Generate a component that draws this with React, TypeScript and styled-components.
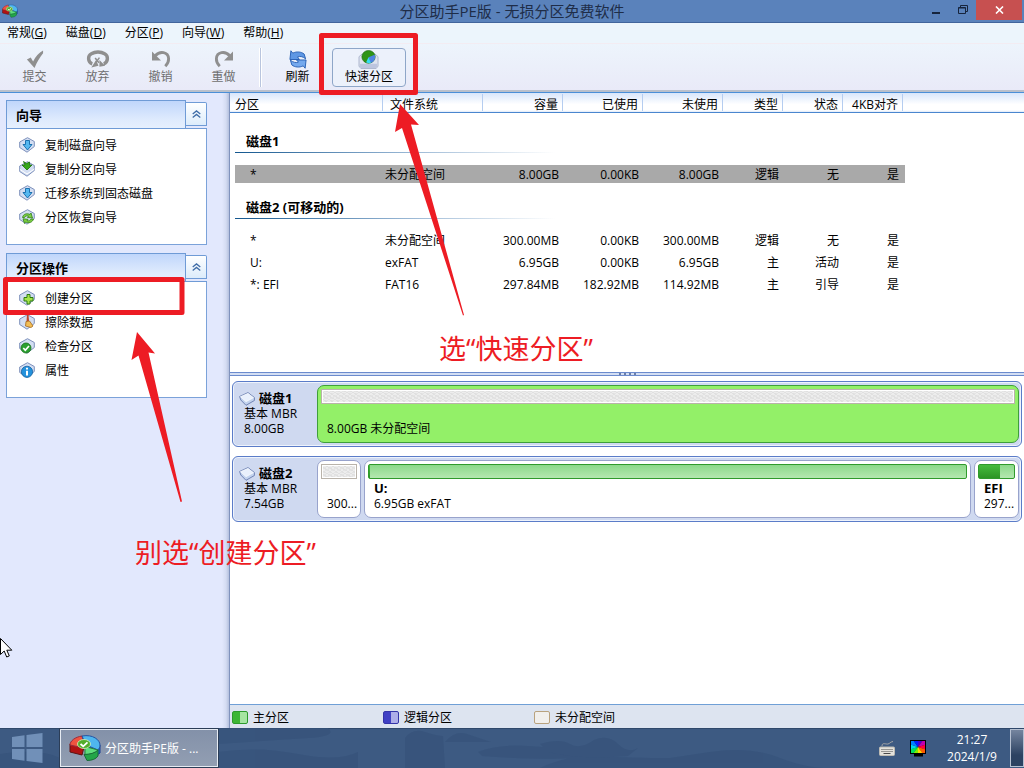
import React from "react";
import styled, { createGlobalStyle, css } from "styled-components";

const GlobalStyle = createGlobalStyle`
  * { box-sizing: border-box; }
  body { margin: 0; }
  body, button, table {
    font-family: "Open Sans", "Noto Sans CJK SC", sans-serif;
    font-size: 12px;
    line-height: 15px;
    color: #000;
  }
  button { margin: 0; padding: 0; border: 0; background: none; cursor: default; white-space: nowrap; }
  b { font-size: 13px; }
  svg { display: block; flex: none; }
`;

const Desktop = styled.div`
  position: relative;
  display: flex;
  flex-direction: column;
  min-height: 100vh;
  overflow: hidden;
  background: #fff;
`;

/* ---------- title bar ---------- */

const TitleBar = styled.header`
  display: grid;
  grid-template-columns: 1fr auto 1fr;
  height: 23px;
  background: #5a82bb;
  border-bottom: 1px solid #41659c;
`;

const TitleIcon = styled.div`
  padding: 4px 0 0 2px;
`;

const TitleText = styled.h1`
  margin: 0;
  font-size: 15px;
  font-weight: 400;
  line-height: 23px;
  color: #1e2d48;
`;

const WindowButtons = styled.div`
  display: flex;
  justify-content: flex-end;
  padding-right: 2px;
`;

const WindowButton = styled.button<{ $close?: boolean }>`
  display: flex;
  align-items: center;
  justify-content: center;
  width: ${(p) => (p.$close ? 46 : 26)}px;
  height: 20px;
  ${(p) => p.$close && css`background: #c75050;`}
`;

/* ---------- menu and toolbar ---------- */

const MenuBar = styled.nav`
  display: flex;
  gap: 19px;
  height: 20px;
  padding-left: 7px;
  background: #ecf5fc;
`;

const MenuItem = styled.button`
  line-height: 20px;
`;

const ToolBar = styled.div`
  display: flex;
  align-items: flex-start;
  height: 49px;
  padding: 4px 0 0 3px;
  background: linear-gradient(#edf4fc, #e9eaf8);
  border-top: 1px solid #f3ecf2;
  border-bottom: 2px solid #b9c0cc;
`;

const ToolButton = styled.button<{ $framed?: boolean }>`
  display: flex;
  flex-direction: column;
  align-items: center;
  width: 63px;
  height: 39px;
  padding-top: 1px;
  border: 1px solid transparent;
  &:disabled { color: #6f6f6f; }
  ${(p) =>
    p.$framed &&
    css`
      width: 74px;
      margin-left: 3px;
      border-color: #8ea6c8;
      border-radius: 4px;
      background: #ecf1fb;
    `}
`;

const ToolSeparator = styled.div`
  width: 3px;
  height: 39px;
  margin: 0 4px;
  border-left: 1px solid #fff;
  border-right: 1px solid #fff;
  background: #b9c5de;
`;

/* ---------- work area ---------- */

const WorkArea = styled.div`
  display: flex;
  flex: 1;
  border-top: 1px solid #4a8fd8;
`;

const Sidebar = styled.aside`
  display: flex;
  flex-direction: column;
  gap: 8px;
  flex: none;
  width: 230px;
  padding: 7px 22px 0 6px;
  border-right: 1px solid #8093bd;
  background: linear-gradient(to right, #e2e8fd 222px, #d4dcf2 226px, #b4c0de 229px);
`;

const TaskPanel = styled.section`
  height: 145px;
  border: 1px solid #7ba2d9;
  border-top: 0;
  background: #fff;
`;

const TaskPanelHead = styled.div`
  display: flex;
  align-items: center;
  height: 29px;
  margin: 0 -1px;
  border-bottom: 1px solid #6f9bd6;
  background: #e2e8fd;
`;

const TaskPanelTitle = styled.h2`
  flex: 1;
  height: 28px;
  margin: 0;
  padding-left: 9px;
  font-size: 13px;
  line-height: 28px;
  border: 1px solid #6f9bd6;
  border-bottom: 0;
  background: linear-gradient(#c0d6fb, #dfebfd 70%, #e6f0fe);
`;

const CollapseButton = styled.button`
  display: flex;
  align-items: center;
  justify-content: center;
  width: 21px;
  height: 24px;
  border: 1px solid #6f9bd6;
  border-left: 0;
  border-radius: 0 2px 0 0;
  background: linear-gradient(#fff, #dcecfb);
`;

const TaskList = styled.ul`
  margin: 0;
  padding: 4px 0 0 12px;
  list-style: none;
`;

const TaskButton = styled.button`
  display: flex;
  align-items: center;
  gap: 10px;
  height: 24px;
`;

const Main = styled.main`
  display: flex;
  flex-direction: column;
  flex: 1;
  min-width: 0;
`;

/* ---------- partition table ---------- */

const ListPane = styled.div`
  height: 279px;
`;

const PartitionTable = styled.table`
  width: 100%;
  table-layout: fixed;
  border-spacing: 0;
`;

const HeadCell = styled.th<{ $width?: number; $left?: number }>`
  width: ${(p) => (p.$width ? `${p.$width}px` : "auto")};
  height: 20px;
  padding: 3px 5px 0 ${(p) => p.$left ?? 0}px;
  font-weight: 400;
  text-align: ${(p) => (p.$left ? "left" : "right")};
  white-space: nowrap;
  border-bottom: 1px solid #4a86cf;
  background:
    linear-gradient(#b5cdf0, #b5cdf0) right 0 top 1px / ${(p) => (p.$width ? 1 : 0)}px 17px no-repeat,
    linear-gradient(#d8e6fb, #fff 60%, #fff 90%, #dfe9f8);
`;

const GroupCell = styled.th<{ $height: number }>`
  height: ${(p) => p.$height}px;
  padding: 0 0 10px 5px;
  vertical-align: bottom;
  text-align: left;
`;

const GroupTitle = styled.div`
  width: 320px;
  height: 23px;
  padding-left: 11px;
  font-size: 13px;
  line-height: 22px;
  background: linear-gradient(to right, #14578f, #8fb0d0 50%, #fff) left bottom / 100% 1px no-repeat;
`;

const Row = styled.tr<{ $selected?: boolean }>`
  ${(p) =>
    p.$selected &&
    css`background: linear-gradient(#a9a9a9, #a9a9a9) 5px 2px / 670px 18px no-repeat;`}
`;

const Cell = styled.td<{ $left?: number }>`
  height: 22px;
  padding: 0 4px 0 ${(p) => p.$left ?? 0}px;
  text-align: ${(p) => (p.$left ? "left" : "right")};
  white-space: nowrap;
`;

const Splitter = styled.div`
  display: flex;
  align-items: center;
  justify-content: center;
  gap: 3px;
  height: 4px;
  border: solid #6c8bcd;
  border-width: 1px 0;
  background: #d3def3;
`;

const Grip = styled.i`
  width: 2px;
  height: 2px;
  background: #6b7ea8;
`;

/* ---------- disk map ---------- */

const DiskMap = styled.div`
  display: flex;
  flex-direction: column;
  gap: 9px;
  flex: 1;
  padding: 5px 2px;
`;

const Disk = styled.section`
  display: flex;
  gap: 3px;
  height: 66px;
  padding: 3px 2px 3px 0;
  border: 1px solid #5b7cc8;
  border-radius: 6px;
  background: #cfd9f0;
  box-shadow: inset 0 0 0 1px #eef3fc;
`;

const DiskInfo = styled.div`
  width: 81px;
  padding: 6px 0 0 11px;
`;

const DiskName = styled.div`
  display: flex;
  align-items: center;
  gap: 4px;
  height: 15px;
  margin-left: -5px;
`;

const Partition = styled.div<{ $width?: number; $selected?: boolean }>`
  display: flex;
  flex-direction: column;
  flex: ${(p) => (p.$width ? `0 0 ${p.$width}px` : "1")};
  min-width: 0;
  height: 58px;
  padding: 3px;
  border: 1px solid ${(p) => (p.$selected ? "#3f9f3a" : "#98a3cc")};
  border-radius: 7px;
  background: ${(p) => (p.$selected ? "#93f068" : "#fff")};
`;

const UsageBar = styled.div<{ $kind: "free" | "primary" }>`
  height: 15px;
  flex: none;
  border: 1px solid;
  ${(p) =>
    p.$kind === "free"
      ? css`
          border-color: #b9b3aa;
          background:
            repeating-linear-gradient(30deg, #e0e0e0 0 1px, transparent 1px 3px),
            repeating-linear-gradient(-30deg, #e4e4e4 0 1px, #ededed 1px 3px);
          box-shadow: inset 0 0 0 1px #fff;
        `
      : css`
          border-color: #2f9a2c;
          border-radius: 2px;
          background: linear-gradient(#8cd88a, #b4e8b0);
        `}
`;

const UsageFill = styled.div`
  min-width: 1px;
  height: 100%;
  background: linear-gradient(#46bb3d, #2d9426);
`;

const PartitionText = styled.div`
  flex: 1;
  display: flex;
  flex-direction: column;
  justify-content: flex-end;
  padding: 0 0 3px 6px;
  white-space: nowrap;
`;

/* ---------- legend ---------- */

const Legend = styled.footer`
  display: flex;
  align-items: center;
  height: 24px;
  padding-left: 2px;
  border-top: 1px solid #6f9fd6;
  background: #dde4f0;
`;

const LegendItem = styled.div`
  display: flex;
  align-items: center;
  gap: 5px;
  width: 151px;
  padding-top: 2px;
`;

const Swatch = styled.span<{ $border: string; $fill: string }>`
  width: 16px;
  height: 13px;
  border: 1px solid ${(p) => p.$border};
  border-radius: 2px;
  background: ${(p) => p.$fill};
`;

/* ---------- taskbar ---------- */

const TaskBar = styled.div`
  position: relative;
  display: flex;
  align-items: center;
  height: 40px;
  background: #3d5a82;
`;

const TaskBarScene = styled.svg`
  position: absolute;
  inset: 0;
  width: 100%;
  height: 100%;
`;

const StartButton = styled.button`
  position: relative;
  width: 60px;
  height: 40px;
  padding-left: 12px;
`;

const AppButton = styled.button`
  position: relative;
  display: flex;
  align-items: center;
  gap: 4px;
  width: 158px;
  height: 38px;
  padding-left: 8px;
  color: #fff;
  border: 1px solid #e6ebf2;
  outline: 1px solid #2b3d57;
  background: linear-gradient(#8391a9, #929eb2);
`;

const Tray = styled.div`
  position: relative;
  display: flex;
  align-items: center;
  gap: 15px;
  margin-left: auto;
`;

const Clock = styled.time`
  width: 62px;
  margin-right: -8px;
  line-height: 17px;
  text-align: center;
  color: #fff;
`;

const ShowDesktop = styled.button`
  width: 14px;
  height: 38px;
  border: 1px solid #b6c1d2;
  background: linear-gradient(#75859f, #2c4262 70%);
`;

/* ---------- notes drawn over the window ---------- */

const NoteLayer = styled.svg`
  position: absolute;
  left: 0;
  top: 0;
  pointer-events: none;
`;

const Note = styled.p<{ $x: number; $y: number }>`
  position: absolute;
  left: ${(p) => p.$x}px;
  top: ${(p) => p.$y}px;
  margin: 0;
  font-size: 27px;
  line-height: 36px;
  white-space: nowrap;
  color: #ed1c24;
  pointer-events: none;
`;

/* ---------- drawings ---------- */

const PieLogo = ({ width, height }: { width: number; height: number }) => (
  <svg width={width} height={height} viewBox="0 0 32 26" aria-hidden="true">
    <path d="M1 9v8l12 3 2-8z" fill="#b01212" stroke="#5d1212" />
    <path d="M16 13l15-3v8l-3 2z" fill="#1e6fc0" stroke="#1b3f92" />
    <path d="M13 1C6 2 1 6 1 10l9 2 5-2z" fill="#ef5340" stroke="#9b2b3c" />
    <path d="M13 1C24-1 31 5 31 10c0 2-1 4-2 5l-12-5z" fill="#4fb6ee" stroke="#27529f" />
    <path d="M16 11.500l13 3.500c-2 3-7 4.500-13 4.500z" fill="#5fdd7d" stroke="#25823f" />
    <path d="M15 19.500c6 0 11-1.500 14-4.500v6c-2 3-6 4.500-11 4.500z" fill="#23a548" stroke="#1a6b38" />
    <ellipse cx="15" cy="9" rx="6.500" ry="4.500" fill="#52ad2c" stroke="#d8f3c4" strokeWidth="0.800" />
    <path d="M11.500 9l2.700 2.300 4.300-4" fill="none" stroke="#fff" strokeWidth="1.800" />
  </svg>
);

const Plate = () => (
  <path d="M0.700 5L8.500 0.700 15.300 4.500v5L8 15.200 0.700 10.500z" fill="#d3def2" stroke="#7d90bb" strokeLinejoin="round" />
);

const taskMarks: Record<string, React.ReactNode> = {
  down: <path d="M6.500 3.500h4v4h2.500L8.500 13 4 7.500h2.500z" fill="#55b8f0" stroke="#0f66a8" strokeWidth="0.900" />,
  green: (
    <>
      <path d="M1 8.500l7 4.500 7.500-5" fill="none" stroke="#fff" />
      <path d="M4.500 0.500l3 2 3-1.500v3h2.500L8 9 3 4h3z" fill="#35a818" stroke="#1c6f0d" strokeWidth="0.800" />
    </>
  ),
  restore: (
    <>
      <path d="M3.500 8.500C4 5 8 3.800 11 5.500l1-1.500 1.500 5-5-.5 1-1.500C8 6.500 6 7 5.500 8.500z" fill="#7fd042" stroke="#2d7d17" strokeWidth="0.800" />
      <path d="M14.500 10c-1 3.500-5 4.700-8 3l-1 1.500L4 9.800l5 .5-1 1.300c1.500.7 3.500 0 4-1.600z" fill="#7fd042" stroke="#2d7d17" strokeWidth="0.800" />
    </>
  ),
  plus: <path d="M8 4.500h3V7.500H14V11h-3v3H8v-3H5V7.500h3z" fill="#a5e34a" stroke="#2b7c10" />,
  broom: (
    <>
      <path d="M8 0.500l1.500 0L10 7 7.500 8z" fill="#c0472c" />
      <path d="M7 7.500l3.500-.5L14 12l-2 1.500L6.500 12z" fill="#f2bd55" stroke="#a46a1c" strokeWidth="0.800" />
    </>
  ),
  check: (
    <>
      <circle cx="7" cy="10" r="5" fill="#2ba02f" stroke="#17701c" strokeWidth="0.800" />
      <path d="M4.300 10l2 2.200L10 8" fill="none" stroke="#fff" strokeWidth="1.700" />
    </>
  ),
  info: (
    <>
      <circle cx="8" cy="9.800" r="5.600" fill="#2492dc" stroke="#12609f" strokeWidth="0.800" />
      <path d="M8 5.700v1.800M8 8.700v4.800" stroke="#fff" strokeWidth="2" />
    </>
  ),
};

const TaskIcon = ({ mark }: { mark: string }) => (
  <svg width="16" height="16" viewBox="0 0 16 16" aria-hidden="true">
    <Plate />
    {taskMarks[mark]}
  </svg>
);

const DiskIcon = () => (
  <svg width="16" height="14" viewBox="0 0 16 14" aria-hidden="true">
    <path d="M0.600 4.500L9 0.600 15.400 5.500v3L7 13.300 1.800 8z" fill="#c3d3ee" stroke="#7184b4" strokeLinejoin="round" />
    <path d="M1.500 4.700L9 1.400l5.500 4.300-7.500 4z" fill="#e9f0fc" stroke="#fff" strokeWidth="0.600" />
  </svg>
);

const toolIcons = {
  commit: <path d="M1.500 10l4-2 2.500 4C10.500 7 14 3 18.500 0.500v3C15 8 12 13 9.500 19z" fill="#8f8f8f" />,
  discard: (
    <>
      <path d="M5.500 14.500C0.500 13 0.500 6 4.500 4c4-2.500 10-2.500 14 0 4 2 4 9-1 10.500" fill="none" stroke="#8f8f8f" strokeWidth="3.600" />
      <path d="M8.500 8.500l4 5M13 8l-4 5.500" stroke="#8f8f8f" strokeWidth="1.600" />
      <path d="M4.500 18.500l5-8 2.500 6zM13 10.500l6 6-6 1z" fill="#8f8f8f" />
    </>
  ),
  undo: (
    <>
      <path d="M4 6C9 0.500 17.500 2 18 9c.2 3-1 5.500-3.500 8" fill="none" stroke="#8f8f8f" strokeWidth="3" />
      <path d="M0.500 1.500V11H10z" fill="#8f8f8f" />
    </>
  ),
  redo: (
    <>
      <path d="M16 6C11 0.500 2.500 2 2 9c-.2 3 1 5.500 3.500 8" fill="none" stroke="#8f8f8f" strokeWidth="3" />
      <path d="M19.500 1.500V11H10z" fill="#8f8f8f" />
    </>
  ),
  refresh: (
    <>
      <path d="M2.500 0.800l2 2.500c4-2 9-1.500 12 1l1.500 5c-3-2.500-6-3-8.500-2l2 2.700H1.500z" fill="#5e97e4" stroke="#2860b4" />
      <path d="M17.500 19.200l-2-2.500c-4 2-9 1.500-12-1l-1.500-5c3 2.500 6 3 8.500 2L8.500 10.500h10z" fill="#74a9ee" stroke="#2860b4" />
    </>
  ),
  quick: (
    <>
      <path d="M1 7l3-2.500h14L21 7v10l-2 2.500H3L1 17z" fill="#dfe3f0" stroke="#aab4cc" />
      <path d="M2 14.500h18V17l-1.500 2h-15L2 17z" fill="#bcc5df" />
      <ellipse cx="11" cy="7.200" rx="7" ry="6.700" fill="#2f9416" stroke="#1d6a14" strokeWidth="0.700" />
      <path d="M11 7.500L17.500 5c1.500 4-1 8-4.500 8.700z" fill="#4f83e2" />
      <path d="M11 7.500l2.500 6.300c-2 .5-3.500.2-5-.8z" fill="#35dcf5" />
    </>
  ),
};

const ToolIcon = ({ name }: { name: keyof typeof toolIcons }) => {
  const wide = name === "discard" || name === "quick";
  return (
    <svg width={wide ? 24 : 20} height="19" viewBox={wide ? "-1 0 25 20" : "0 0 20 20"} aria-hidden="true">
      {toolIcons[name]}
    </svg>
  );
};

const CollapseIcon = () => (
  <svg width="9" height="8" viewBox="0 0 9 8" aria-hidden="true">
    <path d="M0.700 3.900L4.500 0.900l3.800 3M0.700 7.400L4.500 4.400l3.800 3" fill="none" stroke="#3f6da8" strokeWidth="1.300" />
  </svg>
);

const WindowsLogo = () => (
  <svg width="31" height="30" viewBox="0 0 31 30" aria-hidden="true">
    <path d="M0 4l12.500-1.700V14H0zM14.500 2L30.500 0v14h-16zM0 16h12.500v11.700L0 26zM14.500 16h16v14l-16-2z" fill="#7190b8" />
  </svg>
);

const KeyboardIcon = () => (
  <svg width="16" height="15" viewBox="0 0 16 15" aria-hidden="true">
    <path d="M3 5c0-4 4-1.500 6-2s2-2 5-2.500" fill="none" stroke="#a6a6a6" />
    <rect x="0.500" y="6" width="15" height="8.500" rx="1" fill="#e4e2dc" stroke="#bdbab2" />
    <path d="M2.500 8.500h11M2.500 10.500h11" stroke="#4a4a4a" strokeDasharray="1 1" />
    <path d="M4.500 12.500h7" stroke="#4a4a4a" />
  </svg>
);

const wheelColors = ["#4c00c8", "#c000b0", "#ff0040", "#ff5a00", "#ffd800", "#7cf000", "#00e060", "#00d8e8", "#0080ff", "#0020ff"];

const DisplayIcon = () => (
  <svg width="16" height="17" viewBox="0 0 16 17" aria-hidden="true">
    <rect width="16" height="14" fill="#000" />
    <path d="M4 14h9v2.500H4z" fill="#000" />
    <svg x="1" y="1" width="14" height="12" viewBox="-7 -6 14 12">
      {wheelColors.map((color, i) => {
        const a = ((i * 36 - 90) * Math.PI) / 180;
        const b = (((i + 1) * 36 - 88) * Math.PI) / 180;
        return (
          <path
            key={color}
            fill={color}
            d={`M0 0L${12 * Math.cos(a)} ${12 * Math.sin(a)}L${12 * Math.cos(b)} ${12 * Math.sin(b)}Z`}
          />
        );
      })}
    </svg>
  </svg>
);

/* ---------- content ---------- */

const menus = [
  ["常规", "G"],
  ["磁盘", "D"],
  ["分区", "P"],
  ["向导", "W"],
  ["帮助", "H"],
];

const panels = [
  {
    title: "向导",
    items: [
      ["down", "复制磁盘向导"],
      ["green", "复制分区向导"],
      ["down", "迁移系统到固态磁盘"],
      ["restore", "分区恢复向导"],
    ],
  },
  {
    title: "分区操作",
    items: [
      ["plus", "创建分区"],
      ["broom", "擦除数据"],
      ["check", "检查分区"],
      ["info", "属性"],
    ],
  },
];

const columns: { label: string; width: number; left?: number }[] = [
  { label: "分区", width: 153, left: 5 },
  { label: "文件系统", width: 100, left: 7 },
  { label: "容量", width: 80 },
  { label: "已使用", width: 80 },
  { label: "未使用", width: 80 },
  { label: "类型", width: 60 },
  { label: "状态", width: 60 },
  { label: "4KB对齐", width: 60 },
];

const cellLeft = [20, 2];

const groups = [
  {
    title: "磁盘1",
    height: 50,
    rows: [["*", "未分配空间", "8.00GB", "0.00KB", "8.00GB", "逻辑", "无", "是"]],
  },
  {
    title: "磁盘2 (可移动的)",
    height: 44,
    rows: [
      ["*", "未分配空间", "300.00MB", "0.00KB", "300.00MB", "逻辑", "无", "是"],
      ["U:", "exFAT", "6.95GB", "0.00KB", "6.95GB", "主", "活动", "是"],
      ["*: EFI", "FAT16", "297.84MB", "182.92MB", "114.92MB", "主", "引导", "是"],
    ],
  },
];

const DiskSummary = ({ name, size }: { name: string; size: string }) => (
  <DiskInfo>
    <DiskName>
      <DiskIcon />
      <b>{name}</b>
    </DiskName>
    <div>基本 MBR</div>
    <div>{size}</div>
  </DiskInfo>
);

export default function App() {
  return (
    <Desktop>
      <GlobalStyle />
      <TitleBar>
        <TitleIcon>
          <PieLogo width={16} height={14} />
        </TitleIcon>
        <TitleText>分区助手PE版 - 无损分区免费软件</TitleText>
        <WindowButtons>
          <WindowButton aria-label="最小化">
            <svg width="10" height="10" viewBox="0 0 10 10">
              <path d="M0 8h8" stroke="#16243c" strokeWidth="2" />
            </svg>
          </WindowButton>
          <WindowButton aria-label="还原">
            <svg width="10" height="10" viewBox="0 0 10 10">
              <path d="M2.500 3V0.500h7v6H8M0.500 2.500h7v6h-7z M0.500 3h7" fill="none" stroke="#16243c" />
            </svg>
          </WindowButton>
          <WindowButton $close aria-label="关闭">
            <svg width="9" height="8" viewBox="0 0 9 8">
              <path d="M1 0.500l7 7M8 0.500l-7 7" stroke="#fff" strokeWidth="1.600" />
            </svg>
          </WindowButton>
        </WindowButtons>
      </TitleBar>

      <MenuBar>
        {menus.map(([label, key]) => (
          <MenuItem key={key}>
            {label}(<u>{key}</u>)
          </MenuItem>
        ))}
      </MenuBar>

      <ToolBar>
        <ToolButton disabled><ToolIcon name="commit" />提交</ToolButton>
        <ToolButton disabled><ToolIcon name="discard" />放弃</ToolButton>
        <ToolButton disabled><ToolIcon name="undo" />撤销</ToolButton>
        <ToolButton disabled><ToolIcon name="redo" />重做</ToolButton>
        <ToolSeparator />
        <ToolButton><ToolIcon name="refresh" />刷新</ToolButton>
        <ToolButton $framed><ToolIcon name="quick" />快速分区</ToolButton>
      </ToolBar>

      <WorkArea>
        <Sidebar>
          {panels.map((panel) => (
            <TaskPanel key={panel.title}>
              <TaskPanelHead>
                <TaskPanelTitle>{panel.title}</TaskPanelTitle>
                <CollapseButton aria-label="折叠">
                  <CollapseIcon />
                </CollapseButton>
              </TaskPanelHead>
              <TaskList>
                {panel.items.map(([mark, label]) => (
                  <li key={label}>
                    <TaskButton>
                      <TaskIcon mark={mark} />
                      {label}
                    </TaskButton>
                  </li>
                ))}
              </TaskList>
            </TaskPanel>
          ))}
        </Sidebar>

        <Main>
          <ListPane>
            <PartitionTable>
              <thead>
                <tr>
                  {columns.map((c) => (
                    <HeadCell key={c.label} scope="col" $width={c.width} $left={c.left}>
                      {c.label}
                    </HeadCell>
                  ))}
                  <HeadCell />
                </tr>
              </thead>
              {groups.map((group, g) => (
                <tbody key={group.title}>
                  <tr>
                    <GroupCell colSpan={9} $height={group.height} scope="rowgroup">
                      <GroupTitle>{group.title}</GroupTitle>
                    </GroupCell>
                  </tr>
                  {group.rows.map((row) => (
                    <Row key={row[0]} $selected={g === 0}>
                      {row.map((value, i) => (
                        <Cell key={i} $left={cellLeft[i]}>
                          {value}
                        </Cell>
                      ))}
                      <Cell />
                    </Row>
                  ))}
                </tbody>
              ))}
            </PartitionTable>
          </ListPane>

          <Splitter>
            <Grip />
            <Grip />
            <Grip />
            <Grip />
          </Splitter>

          <DiskMap>
            <Disk>
              <DiskSummary name="磁盘1" size="8.00GB" />
              <Partition $selected>
                <UsageBar $kind="free" />
                <PartitionText>8.00GB 未分配空间</PartitionText>
              </Partition>
            </Disk>
            <Disk>
              <DiskSummary name="磁盘2" size="7.54GB" />
              <Partition $width={44}>
                <UsageBar $kind="free" />
                <PartitionText>300...</PartitionText>
              </Partition>
              <Partition>
                <UsageBar $kind="primary">
                  <UsageFill style={{ width: "0%" }} />
                </UsageBar>
                <PartitionText>
                  <b>U:</b>
                  <span>6.95GB exFAT</span>
                </PartitionText>
              </Partition>
              <Partition $width={45}>
                <UsageBar $kind="primary">
                  <UsageFill style={{ width: "61%" }} />
                </UsageBar>
                <PartitionText>
                  <b>EFI</b>
                  <span>297...</span>
                </PartitionText>
              </Partition>
            </Disk>
          </DiskMap>

          <Legend>
            <LegendItem>
              <Swatch $border="#2c9a2c" $fill="linear-gradient(to right, #3db635 50%, #a6e5a2 50%)" />
              主分区
            </LegendItem>
            <LegendItem>
              <Swatch $border="#3434a8" $fill="linear-gradient(to right, #4040c4 50%, #aeaee8 50%)" />
              逻辑分区
            </LegendItem>
            <LegendItem>
              <Swatch $border="#b9a27e" $fill="#f1efec" />
              未分配空间
            </LegendItem>
          </Legend>
        </Main>
      </WorkArea>

      <TaskBar>
        <TaskBarScene viewBox="0 0 1024 40" preserveAspectRatio="none" aria-hidden="true">
          <rect width="1024" height="1" fill="#2f486b" />
          <g fill="#36527a" opacity="0.7">
            <path d="M0 40V26q40-6 60 4t60 10zM218 0h110q10 8-20 10t-90 6zM218 24q40-6 80 2t60-2v16H218zM405 40V10q8-10 20-6t18 4l2 32z" />
            <path d="M445 14q10-12 22-8t24 8zM478 24q20-8 50-6t60 4l-6 8q-50 2-100-2zM540 40q30-14 60-12t70 2l40-6q40-6 70 6t60 10z" />
            <path d="M540 16q20-6 30 0t24-4q14-6 24 4t20 4l-10 8q-50 4-80-4z" />
          </g>
        </TaskBarScene>
        <StartButton aria-label="开始">
          <WindowsLogo />
        </StartButton>
        <AppButton>
          <PieLogo width={32} height={26} />
          分区助手PE版 - ...
        </AppButton>
        <Tray>
          <KeyboardIcon />
          <DisplayIcon />
          <Clock>
            21:27
            <br />
            2024/1/9
          </Clock>
          <ShowDesktop aria-label="显示桌面" />
        </Tray>
      </TaskBar>

      <NoteLayer width="480" height="700" viewBox="0 0 480 700" aria-hidden="true">
        <g fill="none" stroke="#ed1c24" strokeWidth="5" strokeLinejoin="round">
          <rect x="321.500" y="35.500" width="94" height="57" />
          <rect x="5.500" y="279.500" width="176.500" height="33" />
        </g>
        <g fill="#ed1c24">
          <path d="M400 104L395 132 402 128 463 315.500 464 315 411 124.500 419 125z" />
          <path d="M137 332L131.500 360 138.500 355.500 180.500 502 182 501.500 148.500 352.500 155 353.500z" />
        </g>
        <path d="M0.500 638.500v16l3.700-3.500 2.500 6 2.600-1.100-2.500-5.700h5z" fill="#fff" stroke="#000" />
      </NoteLayer>
      <Note $x={439} $y={331}>选“快速分区”</Note>
      <Note $x={135} $y={535}>别选“创建分区”</Note>
    </Desktop>
  );
}
